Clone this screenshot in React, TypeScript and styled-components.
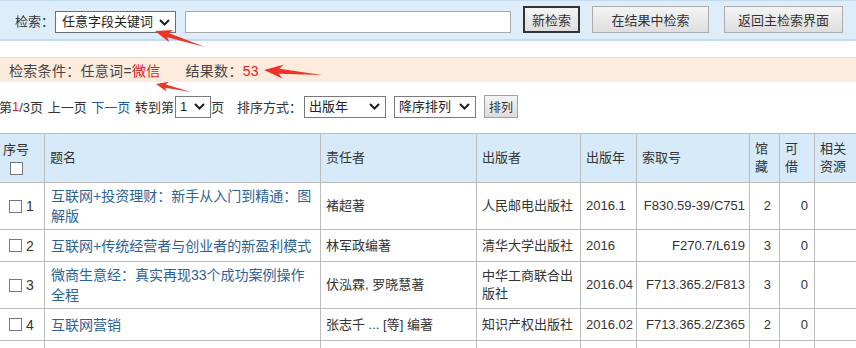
import React from 'react';
import styled, { createGlobalStyle } from 'styled-components';

const GlobalStyle = createGlobalStyle`
  html, body {
    margin: 0;
    padding: 0;
    background: #fff;
    overflow: hidden;
  }
  body {
    font-family: "Liberation Sans", "Noto Sans CJK SC", sans-serif;
    font-size: 13px;
    color: #333;
  }
`;

interface Book {
  title: string;
  author: string;
  publisher: string;
  year: string;
  callNo: string;
  held?: number;
  lendable?: number;
}

const books: Book[] = [
  { title: '互联网+投资理财：新手从入门到精通：图解版', author: '褚超著', publisher: '人民邮电出版社', year: '2016.1', callNo: 'F830.59-39/C751', held: 2, lendable: 0 },
  { title: '互联网+传统经营者与创业者的新盈利模式', author: '林军政编著', publisher: '清华大学出版社', year: '2016', callNo: 'F270.7/L619', held: 3, lendable: 0 },
  { title: '微商生意经：真实再现33个成功案例操作全程', author: '伏泓霖, 罗晓慧著', publisher: '中华工商联合出版社', year: '2016.04', callNo: 'F713.365.2/F813', held: 3, lendable: 0 },
  { title: '互联网营销', author: '张志千 ... [等] 编著', publisher: '知识产权出版社', year: '2016.02', callNo: 'F713.365.2/Z365', held: 2, lendable: 0 },
];

// red annotation arrows drawn over the screenshot
const arrows = [
  { tip: [155, 31], tail: [205, 47], head: 17, wing: 6.5 },
  { tip: [264, 70], tail: [322, 75], head: 19, wing: 7 },
  { tip: [156, 84], tail: [191, 92], head: 12, wing: 5 },
];

const arrowPoints = (a: typeof arrows[number]) => {
  const [x1, y1] = a.tip;
  const [x2, y2] = a.tail;
  const len = Math.hypot(x2 - x1, y2 - y1);
  const ux = (x2 - x1) / len;
  const uy = (y2 - y1) / len;
  const nx = -uy;
  const ny = ux;
  const hx = x1 + ux * a.head;
  const hy = y1 + uy * a.head;
  const ix = x1 + ux * a.head * 0.8;
  const iy = y1 + uy * a.head * 0.8;
  const sw = a.wing * 0.35;
  const pts = [
    [x1, y1],
    [hx + nx * a.wing, hy + ny * a.wing],
    [ix + nx * sw, iy + ny * sw],
    [x2, y2],
    [ix - nx * sw, iy - ny * sw],
    [hx - nx * a.wing, hy - ny * a.wing],
  ];
  return pts.map((p) => p.join(',')).join(' ');
};

const Chevron = () => (
  <svg width="11" height="7" viewBox="0 0 11 7">
    <path d="M1 1 L5.5 5.5 L10 1" fill="none" stroke="#1e1e1e" strokeWidth="2" />
  </svg>
);

const App: React.FC = () => {
  return (
    <Page>
      <GlobalStyle />
      <SearchBar>
        <Label>检索：</Label>
        <Select $width={121}>
          <span>任意字段关键词</span>
          <Chevron />
        </Select>
        <TextInput />
        <Button $width={57} $gap={12} $focused>新检索</Button>
        <Button $width={117} $gap={12}>在结果中检索</Button>
        <Button $width={119} $gap={15}>返回主检索界面</Button>
      </SearchBar>

      <ConditionBar>
        检索条件：任意词=<Red>微信</Red>
        <Count>结果数：<Red>53</Red></Count>
      </ConditionBar>

      <Pager>
        第<Red>1</Red>/3页 上一页 <PageLink>下一页</PageLink> 转到第
        <Select $width={36} $small $gap={1}>
          <span>1</span>
          <Chevron />
        </Select>
        页
        <SortLabel>排序方式：</SortLabel>
        <Select $width={82} $small $gap={2}>
          <span>出版年</span>
          <Chevron />
        </Select>
        <Select $width={82} $small $gap={8}>
          <span>降序排列</span>
          <Chevron />
        </Select>
        <SmallButton>排列</SmallButton>
      </Pager>

      <Table>
        <colgroup>
          <col style={{ width: 45 }} />
          <col style={{ width: 276 }} />
          <col style={{ width: 156 }} />
          <col style={{ width: 104 }} />
          <col style={{ width: 56 }} />
          <col style={{ width: 113 }} />
          <col style={{ width: 30 }} />
          <col style={{ width: 35 }} />
          <col style={{ width: 60 }} />
        </colgroup>
        <thead>
          <tr>
            <Th>
              <SeqHead>
                序号
                <Checkbox />
              </SeqHead>
            </Th>
            <Th>题名</Th>
            <Th>责任者</Th>
            <Th>出版者</Th>
            <Th>出版年</Th>
            <Th>索取号</Th>
            <Th>馆<br />藏</Th>
            <Th>可<br />借</Th>
            <Th>相关<br />资源</Th>
          </tr>
        </thead>
        <tbody>
          {books.map((b, i) => (
            <tr key={i}>
              <Td>
                <SeqCell>
                  <Checkbox />
                  {i + 1}
                </SeqCell>
              </Td>
              <Td $title>
                <TitleLink>{b.title}</TitleLink>
              </Td>
              <Td>{b.author}</Td>
              <Td>{b.publisher}</Td>
              <Td>{b.year}</Td>
              <Td $align="right">{b.callNo}</Td>
              <Td $align="right" $padRight={8}>{b.held}</Td>
              <Td $align="right" $padRight={6}>{b.lendable}</Td>
              <Td />
            </tr>
          ))}
          {/* next row, only its top edge is in view */}
          <tr>
            {Array.from({ length: 9 }).map((_, i) => (
              <Td key={i} />
            ))}
          </tr>
        </tbody>
      </Table>

      <Overlay width="856" height="348">
        {arrows.map((a, i) => (
          <polygon key={i} points={arrowPoints(a)} fill="#ef3326" />
        ))}
      </Overlay>
    </Page>
  );
};

const Page = styled.div`
  position: relative;
  width: 856px;
  height: 348px;
  overflow: hidden;
`;

const SearchBar = styled.div`
  display: flex;
  align-items: flex-end;
  height: 41px;
  box-sizing: border-box;
  padding: 0 0 6px 15px;
  background: #ddedfa;
  border-top: 1px solid #c6dbee;
  border-bottom: 2px solid #c3dbf0;
`;

const Label = styled.span`
  font-size: 13px;
  line-height: 22px;
  color: #333;
`;

const Select = styled.div<{ $width: number; $small?: boolean; $gap?: number }>`
  display: flex;
  align-items: center;
  justify-content: space-between;
  box-sizing: border-box;
  width: ${(p) => p.$width}px;
  height: 22px;
  margin-left: ${(p) => p.$gap ?? 1}px;
  padding: 0 5px 0 ${(p) => (p.$small ? 4 : 6)}px;
  background: #fff;
  border: 1px solid ${(p) => (p.$small ? '#7a7a7a' : '#6e6e6e')};
  font-size: 13px;
  line-height: 20px;
  color: #222;
  white-space: nowrap;
`;

const TextInput = styled.div`
  box-sizing: border-box;
  width: 326px;
  height: 22px;
  margin-left: 9px;
  background: #fff;
  border: 1px solid #a9a9a9;
`;

const Button = styled.div<{ $width: number; $gap: number; $focused?: boolean }>`
  display: flex;
  align-items: center;
  justify-content: center;
  box-sizing: border-box;
  width: ${(p) => p.$width}px;
  height: 27px;
  margin-left: ${(p) => p.$gap}px;
  background: linear-gradient(#f4f4f4, #dedede);
  border: ${(p) => (p.$focused ? '2px solid #333' : '1px solid #acacac')};
  font-size: 13px;
  color: #333;
`;

const ConditionBar = styled.div`
  display: flex;
  align-items: center;
  margin-top: 16px;
  height: 25px;
  box-sizing: border-box;
  padding-left: 9px;
  background: #fdebdd;
  border-top: 1px solid #f2d9c5;
  font-size: 14px;
  letter-spacing: 0.3px;
  color: #444;
  white-space: pre;
`;

const Red = styled.span`
  color: #e0201b;
`;

const Count = styled.span`
  margin-left: 25px;
`;

const Pager = styled.div`
  display: flex;
  align-items: center;
  margin: 13px 0 0 -1px;
  height: 23px;
  font-size: 13px;
  color: #333;
  white-space: pre;
  word-spacing: 1px;
`;

const PageLink = styled.span`
  color: #1f5c95;
`;

const SortLabel = styled.span`
  margin-left: 13px;
`;

const SmallButton = styled.div`
  display: flex;
  align-items: center;
  box-sizing: border-box;
  height: 23px;
  margin-left: 8px;
  padding: 0 4px;
  background: linear-gradient(#f4f4f4, #dcdcdc);
  border: 1px solid #a0a0a0;
  font-size: 12px;
  color: #333;
`;

const Table = styled.table`
  margin: 15px 0 0 -1px;
  width: 875px;
  table-layout: fixed;
  border-collapse: collapse;
`;

const Th = styled.th`
  padding: 6px 5px;
  height: 36px;
  background: #d6eaf9;
  border: 1px solid #bcbcbc;
  font-size: 13px;
  font-weight: normal;
  line-height: 18px;
  text-align: left;
  vertical-align: middle;
  color: #333;
`;

const SeqHead = styled.div`
  display: inline-flex;
  flex-direction: column;
  align-items: center;
  gap: 3px;
  margin-left: -2px;
`;

const Td = styled.td<{ $align?: string; $padRight?: number; $title?: boolean }>`
  height: 25px;
  padding: 3px ${(p) => p.$padRight ?? 4}px 3px ${(p) => (p.$title ? 6 : 5)}px;
  border: 1px solid #bcbcbc;
  font-size: 13px;
  line-height: 18px;
  text-align: ${(p) => p.$align ?? 'left'};
  vertical-align: middle;
  color: #333;
`;

const SeqCell = styled.div`
  display: flex;
  align-items: center;
  gap: 4px;
  padding-left: 4px;
  font-size: 14px;
`;

const TitleLink = styled.span`
  font-size: 14px;
  line-height: 20px;
  color: #2c6296;
`;

const Checkbox = styled.span`
  display: inline-block;
  box-sizing: border-box;
  width: 13px;
  height: 13px;
  background: #fff;
  border: 1px solid #777;
`;

const Overlay = styled.svg`
  position: absolute;
  top: 0;
  left: 0;
  pointer-events: none;
`;

export default App;
